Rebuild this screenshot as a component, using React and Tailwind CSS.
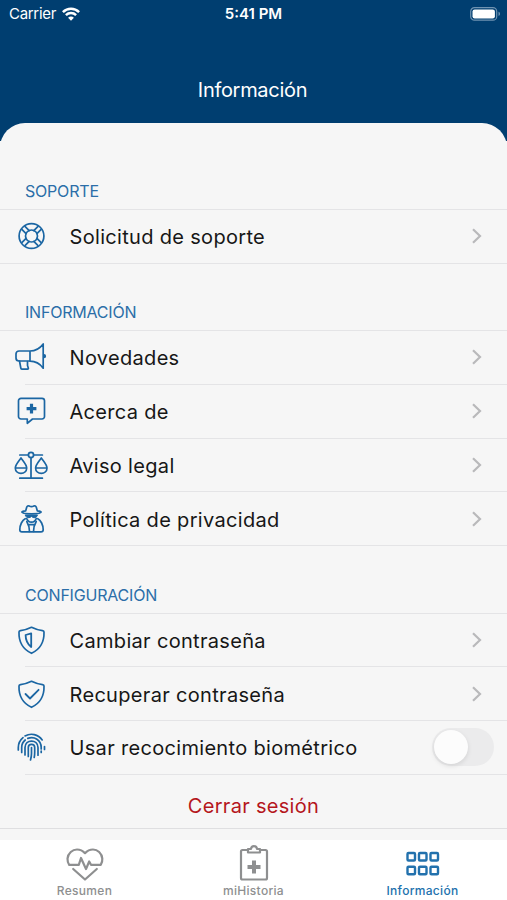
import React, { useState } from 'react';

const RowIcon = ({ children }) => (
    <svg
        viewBox="0 0 36 36"
        className="ml-[13px] h-9 w-9 shrink-0 text-[#1b66a3]"
        fill="none"
        stroke="currentColor"
        strokeWidth="1.7"
        strokeLinecap="round"
        strokeLinejoin="round"
    >
        {children}
    </svg>
);

const LifebuoyIcon = () => (
    <RowIcon>
        <circle cx="18.5" cy="18" r="12.4" />
        <circle cx="18.5" cy="18" r="6" />
        {[45, 135, 225, 315].map((angle) => (
            <path key={angle} d="M24 15.8h5.6M24 20.2h5.6" transform={`rotate(${angle} 18.5 18)`} />
        ))}
    </RowIcon>
);

const MegaphoneIcon = () => (
    <RowIcon>
        <path d="M17 12H6a3 3 0 0 0-3 3v4a3 3 0 0 0 3 3h11zM17 12c5.5 0 9.5-2 13.2-7v24.2c-3.7-5-7.7-7-13.2-7" />
        <path d="M6.5 22l1.3 7a1.5 1.5 0 0 0 1.5 1.2h5.2c.8 0 1-.6.8-1.2l-.8-2.5v-4" />
        <path d="M31 15.7a1.5 1.5 0 0 1 0 3z" fill="currentColor" strokeWidth="1.2" />
    </RowIcon>
);

const ChatPlusIcon = () => (
    <RowIcon>
        <path d="M8 5.3h21a2.5 2.5 0 0 1 2.5 2.5v15.7a2.5 2.5 0 0 1-2.5 2.5h-9.5l-5.2 4.3V26H8a2.5 2.5 0 0 1-2.5-2.5V7.8A2.5 2.5 0 0 1 8 5.3z" />
        <path d="M18.5 10.7v9.8M13.6 15.6h9.8" strokeWidth="3.2" strokeLinecap="butt" />
    </RowIcon>
);

const ScalesIcon = () => (
    <RowIcon>
        <path d="M6.800 8h8.600M20.600 8h8.800M18 10.600V31M6.800 31.200h22.600" />
        <circle cx="18" cy="8" r="2.6" />
        <path d="M8 11c-2.500 3.500-5.700 6.800-5.700 10 0 3.300 2.600 5.300 5.700 5.300s5.700-2 5.700-5.300c0-3.200-3.200-6.500-5.700-10zM2.300 21h11.400" />
        <path d="M28.300 11c-2.500 3.500-5.700 6.800-5.700 10 0 3.300 2.600 5.300 5.700 5.300s5.700-2 5.700-5.300c0-3.200-3.200-6.500-5.700-10zM22.600 21H34" />
    </RowIcon>
);

const SpyIcon = () => (
    <RowIcon>
        <path d="M12.700 9.800l1-3.500c.4-1.300 1.500-1.800 2.500-1.300 1.500.8 3.100.8 4.600 0 1-.5 2.100 0 2.500 1.300l1 3.500c2.500.3 3.900.8 3.900 1.300 0 1-4.200 1.700-9.700 1.700s-9.700-.7-9.700-1.700c0-.5 1.400-1 3.900-1.300z" />
        <path d="M12.500 14h12l-1.300 2.300c-1.300.8-3.200.5-4.700-.8-1.500 1.300-3.400 1.600-4.700.8z" fill="currentColor" strokeWidth="1" />
        <path d="M13.700 17.500c.8 2.300 2.600 3.700 4.800 3.700s4-1.400 4.800-3.700" />
        <path d="M12.200 17.700c-3 1.500-5.400 6.300-5.400 11 0 1.500.9 2.200 2.200 2.200h19c1.300 0 2.200-.7 2.200-2.200 0-4.700-2.400-9.500-5.400-11" />
        <path d="M13.800 20.500c1.700 3 2.900 6.200 2.700 10M23.200 20.500c-1.700 3-2.900 6.200-2.700 10M16.500 23.700h4" />
    </RowIcon>
);

const shieldPath = 'M18.5 5.3c3.8 1.9 8 3 11 3.3.9.1 1.5.7 1.5 1.5C31.3 19.5 27.5 27 18.5 31.3 9.5 27 5.7 19.5 6 10.1c0-.8.6-1.4 1.5-1.5 3-.3 7.2-1.4 11-3.3z';

const HalfShieldIcon = () => (
    <RowIcon>
        <path d={shieldPath} />
        <path d="M18.2 11.3l-5.6 1.7c0 5 1.8 9 5.6 12z" strokeWidth="1.8" />
    </RowIcon>
);

const CheckShieldIcon = () => (
    <RowIcon>
        <path d={shieldPath} />
        <path d="M12.5 18l4.5 4.5 8.6-8.7" strokeWidth="1.8" />
    </RowIcon>
);

const FingerprintIcon = () => (
    <RowIcon>
        <path d="M5.3 21v-2.5c0-4 1.8-7.5 4.7-9.9M12 6.9c6-3.2 13-1.7 17.2 4" />
        <path d="M8.7 23.5v-5c0-3.3 1.3-5.7 3.5-7.5M14.8 9.4c6.5-2.5 13.4 1.7 13.4 9.1V20M31.5 17.5v3M28.2 22v1.5" />
        <path d="M12 26v-7.5c0-8.6 13-8.6 13 0v7.7" />
        <path d="M15.3 27.5v-9c0-4.3 6.4-4.3 6.4 0v4.7c0 2-.1 3.7-.5 5.3" />
        <path d="M18.5 18.5v6c0 2.3-.3 4-1 6.5" />
    </RowIcon>
);

const ChevronIcon = () => (
    <svg viewBox="0 0 12 18" className="mr-6 h-[18px] w-3 shrink-0" fill="none" stroke="#b9b9bb" strokeWidth="2.2">
        <path d="M2 2.2L9 9l-7 6.8" />
    </svg>
);

const HeartIcon = () => (
    <svg viewBox="0 0 38 36" className="h-9 w-[38px]" fill="none" stroke="currentColor" strokeWidth="2.2" strokeLinecap="round" strokeLinejoin="round">
        <path d="M3.2 19.8h9.600L15 13l5 11 3.200-7.500 1.800 3.300h9.800c1.300-2.300 1.700-4.200 1.500-6.200C35.800 8 31.500 4.500 27 4.500c-3.500 0-6 1.500-8 3.700C17 6 14.500 4.500 11 4.500 6.500 4.500 2 8 1.500 13.600c-.1 2.200.4 4.200 1.700 6.200z" />
        <path d="M7.2 24L19 34.500 30.800 24" />
    </svg>
);

const ClipboardIcon = () => (
    <svg viewBox="0 0 38 36" className="h-9 w-[38px]" fill="none" stroke="currentColor" strokeWidth="2.2" strokeLinejoin="round">
        <path d="M13 5H7.5A1.5 1.5 0 0 0 6 6.5V33a1.500 1.500 0 0 0 1.500 1.500h23A1.500 1.500 0 0 0 32 33V6.500A1.500 1.500 0 0 0 30.500 5H25" />
        <path d="M13 7.500V4h3c.3-3.800 5.700-3.800 6 0h3v3.500z" />
        <path d="M19 15.500v13M12.500 22h13" strokeWidth="4" />
    </svg>
);

const GridIcon = () => (
    <svg viewBox="0 0 38 36" className="h-9 w-[38px]" fill="none" stroke="currentColor" strokeWidth="2.4">
        {[8, 21.7].map((y) =>
            [3.5, 15, 26.5].map((x) => <rect key={`${x}-${y}`} x={x} y={y} width="7.5" height="7.5" rx="1" />)
        )}
    </svg>
);

const sections = [
    {
        title: 'SOPORTE',
        spacing: 'h-[68.75px]',
        rows: [{ label: 'Solicitud de soporte', icon: LifebuoyIcon }],
    },
    {
        title: 'INFORMACIÓN',
        spacing: 'h-[67.5px]',
        rows: [
            { label: 'Novedades', icon: MegaphoneIcon },
            { label: 'Acerca de', icon: ChatPlusIcon },
            { label: 'Aviso legal', icon: ScalesIcon },
            { label: 'Política de privacidad', icon: SpyIcon },
        ],
    },
    {
        title: 'CONFIGURACIÓN',
        spacing: 'h-[67.5px]',
        rows: [
            { label: 'Cambiar contraseña', icon: HalfShieldIcon },
            { label: 'Recuperar contraseña', icon: CheckShieldIcon },
            { label: 'Usar recocimiento biométrico', icon: FingerprintIcon, toggle: true },
        ],
    },
];

const tabs = [
    { label: 'Resumen', icon: HeartIcon },
    { label: 'miHistoria', icon: ClipboardIcon },
    { label: 'Información', icon: GridIcon },
];

const StatusBar = () => (
    <div className="grid h-7 grid-cols-3 items-center text-[15px] text-white">
        <div className="flex items-center gap-1.5 pl-[9px]">
            <span className="tracking-[-0.3px]">Carrier</span>
            <svg viewBox="0 0 18 14" className="-mt-px h-3.5 w-[18px]" fill="none" stroke="white" strokeWidth="2.5">
                <path d="M.9 5.1c4.6-4.5 11.6-4.5 16.2 0M3.9 8.2c2.9-2.8 7.3-2.8 10.2 0" />
                <path d="M9 13.7L6.1 10.7c1.7-1.5 4.1-1.5 5.8 0z" fill="white" stroke="none" />
            </svg>
        </div>
        <span className="text-center font-semibold">5:41 PM</span>
        <div className="flex justify-end pr-[5px]">
            <svg viewBox="0 0 32 14" className="-mt-px h-3.5 w-8">
                <rect x=".7" y=".6" width="26" height="12.6" rx="3.8" fill="none" stroke="#6f93b1" strokeWidth="1.2" />
                <rect x="2.5" y="2.4" width="22.4" height="9" rx="2.2" fill="white" />
                <path d="M28.5 4.8c2 .6 2 3.6 0 4.2z" fill="#6f93b1" />
            </svg>
        </div>
    </div>
);

const Toggle = ({ checked, onChange }) => (
    <button
        type="button"
        role="switch"
        aria-checked={checked}
        onClick={() => onChange(!checked)}
        className={`mr-[13px] flex h-[38px] w-[62px] items-center rounded-full p-0.5 ${checked ? 'justify-end bg-[#1b66a3]' : 'bg-[#ebebec]'}`}
    >
        <span className="h-[34px] w-[34px] rounded-full bg-[#fcfcfc] shadow-[0_2px_5px_rgba(0,0,0,0.1)]" />
    </button>
);

const App = () => {
    const [biometric, setBiometric] = useState(false);
    const [activeTab, setActiveTab] = useState('Información');

    return (
        <div className="flex h-[900px] w-full flex-col overflow-hidden bg-[#f6f6f6] font-['Inter',sans-serif]">
            <header className="flex h-[141px] shrink-0 flex-col bg-[#003e70]">
                <StatusBar />
                <h1 className="flex h-[95px] items-center justify-center pt-[29px] pr-[2px] text-[20px] tracking-[-0.3px] text-white">Información</h1>
                <div className="h-[18px] overflow-hidden">
                    <div className="h-12 rounded-t-[25px] bg-[#f6f6f6]" />
                </div>
            </header>

            <main className="flex-1 overflow-hidden">
                {sections.map((section) => (
                    <section key={section.title}>
                        <h2 className={`${section.spacing} flex items-end border-b border-[#e4e4e6] pb-1.5 pl-[25px] text-[16px] tracking-[-0.2px] text-[#2b6ea8]`}>
                            {section.title}
                        </h2>
                        {section.rows.map(({ label, icon: Icon, toggle }, idx) => (
                            <div key={label} className="flex h-[53.75px] flex-col">
                                <div className="flex flex-1 items-center">
                                    <Icon />
                                    <span className="ml-[20.5px] flex-1 pt-0.5 text-[20px] tracking-[0.32px] text-[#171717]">{label}</span>
                                    {toggle ? <Toggle checked={biometric} onChange={setBiometric} /> : <ChevronIcon />}
                                </div>
                                {/* Last row closes the group edge to edge */}
                                <div className={`h-px bg-[#e4e4e6] ${idx === section.rows.length - 1 && !toggle ? '' : 'ml-[25px]'}`} />
                            </div>
                        ))}
                    </section>
                ))}
                <button type="button" className="h-[53.75px] w-full border-b border-[#dfdfe1] pt-[9px] text-[20px] tracking-[0.3px] text-[#b5161d]">
                    Cerrar sesión
                </button>
            </main>

            <nav className="grid h-[60px] shrink-0 grid-cols-3 bg-white">
                {tabs.map(({ label, icon: Icon }) => (
                    <button
                        key={label}
                        type="button"
                        onClick={() => setActiveTab(label)}
                        className={`flex flex-col items-center pt-[5px] ${activeTab === label ? 'text-[#2271ad]' : 'text-[#8e8f90]'}`}
                    >
                        <Icon />
                        <span className="mt-0.5 text-[12px] leading-4 font-medium tracking-[0.3px]">{label}</span>
                    </button>
                ))}
            </nav>
        </div>
    );
};

export default App;
